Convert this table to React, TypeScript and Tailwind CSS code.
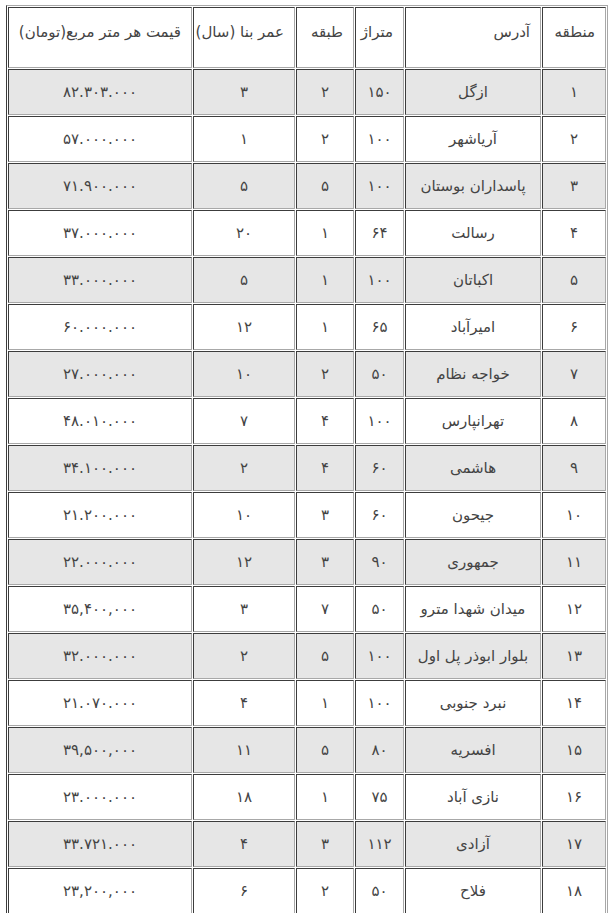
import React from "react";

const toFa = (s: string) => s.replace(/[0-9]/g, (d) => "۰۱۲۳۴۵۶۷۸۹"[Number(d)]);

const headers = [
  { label: "منطقه", w: "w-[64px]" },
  { label: "آدرس", w: "w-[136px]" },
  { label: "متراژ", w: "w-[49px]" },
  { label: "طبقه", w: "w-[58px]" },
  { label: "عمر بنا (سال)", w: "w-[102px]" },
  { label: "قیمت هر متر مربع(تومان)", w: "w-[184px]" },
];

const rows: string[][] = [
  ["1", "ازگل", "150", "2", "3", "82.303.000"],
  ["2", "آریاشهر", "100", "2", "1", "57.000.000"],
  ["3", "پاسداران بوستان", "100", "5", "5", "71.900.000"],
  ["4", "رسالت", "64", "1", "20", "37.000.000"],
  ["5", "اکباتان", "100", "1", "5", "33.000.000"],
  ["6", "امیرآباد", "65", "1", "12", "60.000.000"],
  ["7", "خواجه نظام", "50", "2", "10", "27.000.000"],
  ["8", "تهرانپارس", "100", "4", "7", "48.010.000"],
  ["9", "هاشمی", "60", "4", "2", "34.100.000"],
  ["10", "جیحون", "60", "3", "10", "21.200.000"],
  ["11", "جمهوری", "90", "3", "12", "22.000.000"],
  ["12", "میدان شهدا مترو", "50", "7", "3", "35,400,000"],
  ["13", "بلوار ابوذر پل اول", "100", "5", "2", "32.000.000"],
  ["14", "نبرد جنوبی", "100", "1", "4", "21.070.000"],
  ["15", "افسریه", "80", "5", "11", "39,500,000"],
  ["16", "نازی آباد", "75", "1", "18", "23.000.000"],
  ["17", "آزادی", "112", "3", "4", "33.721.000"],
  ["18", "فلاح", "50", "2", "6", "23,200,000"],
];

// inset cell border: dark top/left, light bottom/right
const cellBorder =
  "border border-solid border-t-[#3c3c3c] border-l-[#3c3c3c] border-b-[#a8a8a8] border-r-[#a8a8a8]";

export default function App() {
  return (
    <div className="bg-white min-h-screen pt-[5px] pl-[6px] font-['DejaVu_Sans',sans-serif] text-[#444]">
      <table
        dir="rtl"
        className="w-[602px] table-fixed border-separate border-spacing-[1px] border border-solid border-t-[#a8a8a8] border-r-[#a8a8a8] border-b-[#3c3c3c] border-l-[#3c3c3c]"
      >
        <thead>
          <tr>
            {headers.map((h) => (
              <th
                key={h.label}
                className={`${h.w} ${cellBorder} h-[61px] align-top pt-[13px] pr-[10px] pl-[2px] text-right font-normal text-[15px] leading-[22px] bg-white whitespace-nowrap`}
              >
                {h.label}
              </th>
            ))}
          </tr>
        </thead>
        <tbody>
          {rows.map((r, i) => (
            <tr key={r[0]} className={i % 2 === 0 ? "bg-[#e6e6e6]" : "bg-white"}>
              {r.map((c, j) => (
                <td
                  key={j}
                  className={`${cellBorder} h-[46px] align-middle text-center text-[15px] leading-[22px] px-[2px] whitespace-nowrap`}
                >
                  {toFa(c)}
                </td>
              ))}
            </tr>
          ))}
        </tbody>
      </table>
    </div>
  );
}
